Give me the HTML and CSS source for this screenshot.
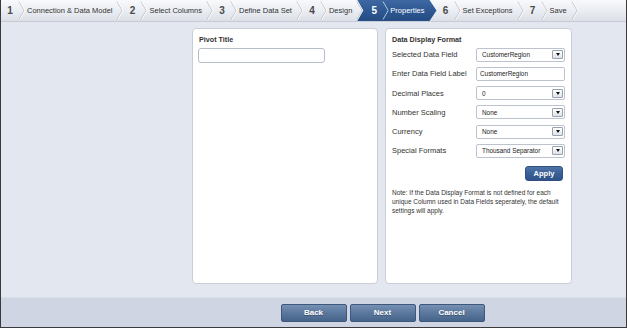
FILE: index.html
```html
<!DOCTYPE html>
<html lang="en">
<head>
    <meta charset="UTF-8">
    <title>Pivot Wizard - Properties</title>
    <link rel="stylesheet" href="styles.css">
</head>
<body>
    <div class="wizard">
        <!-- step bar -->
        <div class="steps">
            <span class="num">1</span>
            <svg class="chev" viewBox="0 0 7 21"><polyline points="0,0 6,10.5 0,21" class="line"/><polyline points="1,0 7,10.5 1,21" class="hl"/></svg>
            <span class="label">Connection &amp; Data Model</span>
            <svg class="chev" viewBox="0 0 7 21"><polyline points="0,0 6,10.5 0,21" class="line"/><polyline points="1,0 7,10.5 1,21" class="hl"/></svg>
            <span class="num">2</span>
            <svg class="chev" viewBox="0 0 7 21"><polyline points="0,0 6,10.5 0,21" class="line"/><polyline points="1,0 7,10.5 1,21" class="hl"/></svg>
            <span class="label">Select Columns</span>
            <svg class="chev" viewBox="0 0 7 21"><polyline points="0,0 6,10.5 0,21" class="line"/><polyline points="1,0 7,10.5 1,21" class="hl"/></svg>
            <span class="num">3</span>
            <svg class="chev" viewBox="0 0 7 21"><polyline points="0,0 6,10.5 0,21" class="line"/><polyline points="1,0 7,10.5 1,21" class="hl"/></svg>
            <span class="label">Define Data Set</span>
            <svg class="chev" viewBox="0 0 7 21"><polyline points="0,0 6,10.5 0,21" class="line"/><polyline points="1,0 7,10.5 1,21" class="hl"/></svg>
            <span class="num">4</span>
            <svg class="chev" viewBox="0 0 7 21"><polyline points="0,0 6,10.5 0,21" class="line"/><polyline points="1,0 7,10.5 1,21" class="hl"/></svg>
            <span class="label">Design</span>
            <svg class="chev" viewBox="0 0 7 21"><polyline points="0,0 6,10.5 0,21" class="line"/><polyline points="1,0 7,10.5 1,21" class="hl"/></svg>
            <div class="step-active">
                <span class="num">5</span>
                <svg class="chev" viewBox="0 0 7 21"><polyline points="0,0 6,10.5 0,21" class="line-w"/></svg>
                <span class="label">Properties</span>
            </div>
            <span class="num">6</span>
            <svg class="chev" viewBox="0 0 7 21"><polyline points="0,0 6,10.5 0,21" class="line"/><polyline points="1,0 7,10.5 1,21" class="hl"/></svg>
            <span class="label">Set Exceptions</span>
            <svg class="chev" viewBox="0 0 7 21"><polyline points="0,0 6,10.5 0,21" class="line"/><polyline points="1,0 7,10.5 1,21" class="hl"/></svg>
            <span class="num">7</span>
            <svg class="chev" viewBox="0 0 7 21"><polyline points="0,0 6,10.5 0,21" class="line"/><polyline points="1,0 7,10.5 1,21" class="hl"/></svg>
            <span class="label">Save</span>
            <svg class="chev" viewBox="0 0 7 21"><polyline points="0,0 6,10.5 0,21" class="line"/><polyline points="1,0 7,10.5 1,21" class="hl"/></svg>
        </div>

        <div class="content">
            <div class="panel pivot">
                <div class="panel-title">Pivot Title</div>
                <div class="textbox"></div>
            </div>

            <div class="panel format">
                <div class="panel-title">Data Display Format</div>
                <div class="form-grid">
                    <span class="field-label">Selected Data Field</span>
                    <div class="select"><span>CustomerRegion</span><span class="arrow"></span></div>

                    <span class="field-label">Enter Data Field Label</span>
                    <div class="input"><span>CustomerRegion</span></div>

                    <span class="field-label">Decimal Places</span>
                    <div class="select"><span>0</span><span class="arrow"></span></div>

                    <span class="field-label">Number Scaling</span>
                    <div class="select"><span>None</span><span class="arrow"></span></div>

                    <span class="field-label">Currency</span>
                    <div class="select"><span>None</span><span class="arrow"></span></div>

                    <span class="field-label">Special Formats</span>
                    <div class="select"><span>Thousand Separator</span><span class="arrow"></span></div>
                </div>
                <div class="actions">
                    <button class="apply">Apply</button>
                </div>
                <p class="note">Note: If the Data Display Format is not defined for each unique Column used in Data Fields seperately, the default settings will apply.</p>
            </div>
        </div>

        <div class="footer">
            <div class="buttons">
                <button class="nav-btn">Back</button>
                <button class="nav-btn">Next</button>
                <button class="nav-btn">Cancel</button>
            </div>
        </div>
    </div>
</body>
</html>
```

FILE: styles.css
```css
body {
    margin: 0;
    font-family: "Liberation Sans", Arial, sans-serif;
    background-color: #ffffff;
}
.wizard {
    width: 627px;
    height: 328px;
    box-sizing: border-box;
    border: 1px solid #3a3a3a;
    border-top: none;
    background-color: #e3e7ef;
    display: flex;
    flex-direction: column;
}

/* step bar */
.steps {
    height: 21px;
    flex: none;
    display: flex;
    align-items: center;
    border-bottom: 1px solid #c6cbd5;
    background: linear-gradient(#f8f9fb, #e9ecf1 55%, #dcdfe6);
    color: #333;
}
.num {
    width: 18px;
    text-align: center;
    font-size: 10px;
    font-weight: bold;
    color: #4a4a4a;
}
.label {
    font-size: 7.5px;
    padding: 0 5px 0 2px;
    white-space: nowrap;
}
.chev {
    width: 6px;
    height: 21px;
    flex: none;
    overflow: visible;
}
.chev .line {
    fill: none;
    stroke: #b2b8c3;
    stroke-width: 1;
}
.chev .hl {
    fill: none;
    stroke: #ffffff;
    stroke-width: 1;
}
.chev .line-w {
    fill: none;
    stroke: #c9d6ea;
    stroke-width: 1;
}
.step-active {
    align-self: stretch;
    display: flex;
    align-items: center;
    margin-left: -6px;
    padding: 0 12px 0 8px;
    background: linear-gradient(#3d68a2, #2c5690 60%, #254c83);
    clip-path: polygon(0 0, calc(100% - 7px) 0, 100% 50%, calc(100% - 7px) 100%, 0 100%, 6px 50%);
}
.step-active .num,
.step-active .label {
    color: #ffffff;
}
.step-active .label {
    padding: 0 0 0 1px;
}

/* panels */
.content {
    height: 275px;
    box-sizing: border-box;
    padding: 6px 0 0 191px;
    display: flex;
    gap: 7px;
}
.panel {
    height: 256px;
    box-sizing: border-box;
    background-color: #ffffff;
    border: 1px solid #c8cdd7;
    border-radius: 4px;
    padding: 6px 6px 0 6px;
    color: #333;
}
.pivot {
    width: 186px;
    padding-left: 5px;
}
.format {
    width: 187px;
}
.panel-title {
    font-size: 7.2px;
    font-weight: bold;
    line-height: 9px;
    margin-bottom: 3.7px;
    color: #333;
}
.pivot .panel-title {
    padding-left: 1px;
}
.textbox {
    width: 127px;
    height: 15px;
    box-sizing: border-box;
    border: 1px solid #b5bdc9;
    border-radius: 3px;
    background-color: #ffffff;
}

.form-grid {
    display: grid;
    grid-template-columns: 84px 89px;
    grid-auto-rows: 14px;
    row-gap: 5.25px;
}
.field-label {
    align-self: center;
    font-size: 7.5px;
    white-space: nowrap;
}
.select,
.input {
    display: flex;
    align-items: center;
    justify-content: space-between;
    box-sizing: border-box;
    border: 1px solid #bcc3ce;
    border-radius: 2px;
    background-color: #ffffff;
    font-size: 6.4px;
    color: #222;
    padding: 0 1px 0 5px;
}
.input {
    padding-left: 3px;
}
.arrow {
    width: 11px;
    height: 9px;
    box-sizing: border-box;
    border: 1px solid #98a1ae;
    border-radius: 1px;
    background: linear-gradient(#ffffff, #dfe3e9);
    display: flex;
    align-items: center;
    justify-content: center;
}
.arrow::after {
    content: "";
    border-left: 2.5px solid transparent;
    border-right: 2.5px solid transparent;
    border-top: 3px solid #111;
}

.actions {
    display: flex;
    justify-content: flex-end;
    margin-top: 7.7px;
    padding-right: 2px;
}
.apply {
    width: 38px;
    height: 15px;
    padding: 0;
    border: 1px solid #2e4f80;
    border-radius: 3px;
    background: linear-gradient(#5175aa, #3a5f96 50%, #2f5389);
    color: #ffffff;
    font-family: "Liberation Sans", Arial, sans-serif;
    font-size: 7.5px;
    font-weight: bold;
}
.note {
    margin: 7px 0 0 0;
    font-size: 6.5px;
    line-height: 9.2px;
    color: #333;
}

/* footer */
.footer {
    flex: 1;
    padding-left: 191px;
    background-color: #cfd5e2;
    border-top: 1px solid #d8dde8;
    display: flex;
    align-items: center;
}
.buttons {
    width: 381px;
    display: flex;
    justify-content: center;
    gap: 3px;
}
.nav-btn {
    width: 66px;
    height: 18px;
    padding: 0;
    border: 1px solid #3e577c;
    border-radius: 2px;
    background: linear-gradient(#7690b3, #5b779d 50%, #46638b);
    color: #ffffff;
    font-family: "Liberation Sans", Arial, sans-serif;
    font-size: 8px;
    font-weight: bold;
    text-shadow: 0 1px 0 rgba(0, 0, 0, 0.3);
}
```
